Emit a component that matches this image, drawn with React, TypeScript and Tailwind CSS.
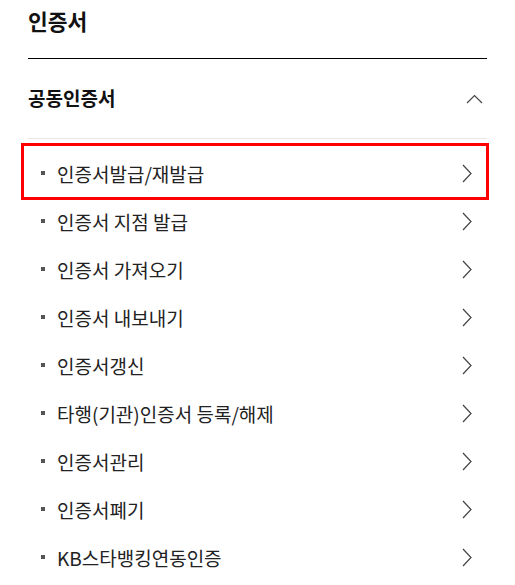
const items = [
  "인증서발급/재발급",
  "인증서 지점 발급",
  "인증서 가져오기",
  "인증서 내보내기",
  "인증서갱신",
  "타행(기관)인증서 등록/해제",
  "인증서관리",
  "인증서폐기",
  "KB스타뱅킹연동인증",
];

function ChevronRight() {
  return (
    <svg width="10" height="19" viewBox="0 0 10 19" fill="none" className="mr-[15px] shrink-0">
      <path d="M1 1L9 9.5L1 18" stroke="#444" strokeWidth="1.2" />
    </svg>
  );
}

function ChevronUp() {
  return (
    <svg width="17" height="10" viewBox="0 0 17 10" fill="none" className="mr-[4px] shrink-0">
      <path d="M1 9L8.5 1.5L16 9" stroke="#444" strokeWidth="1.2" />
    </svg>
  );
}

export default function App() {
  return (
    <div
      className="w-[515px] h-[585px] overflow-hidden bg-white px-[28px] text-[#222]"
      style={{ fontFamily: '"Noto Sans CJK KR", "Noto Sans", sans-serif' }}
    >
      <header className="h-[59px] border-b border-black">
        <h1 className="text-[21.5px] font-bold leading-[42px] text-[#111]">인증서</h1>
      </header>

      <section>
        <div className="flex h-[80px] items-center justify-between border-b border-[#e6e6e6]">
          <h2 className="text-[19px] font-bold text-[#111]">공동인증서</h2>
          <ChevronUp />
        </div>

        <ul className="pt-[10px]">
          {items.map((label, i) => (
            <li key={label} className="relative flex h-[48px] items-center justify-between">
              <div className="flex items-center">
                <span className="ml-[13px] h-[4px] w-[4px] bg-[#555]" />
                <span className="ml-[12px] text-[19px] leading-none">{label}</span>
              </div>
              <ChevronRight />
              {i === 0 && (
                <div className="pointer-events-none absolute -left-[7px] -top-[6px] -right-[2px] -bottom-[3px] border-[3px] border-[#ff0000]" />
              )}
            </li>
          ))}
        </ul>
      </section>
    </div>
  );
}
